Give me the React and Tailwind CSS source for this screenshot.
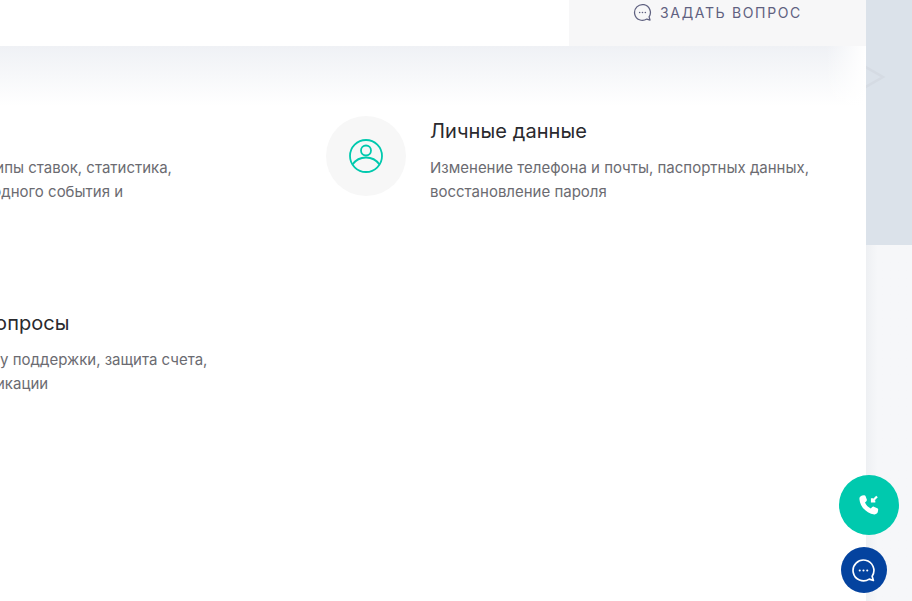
import React from 'react';

const cards = [
  {
    title: 'Правила игры',
    lines: ['Правила сервиса, типы ставок, статистика,', 'результаты ставок одного события и'],
  },
  {
    title: 'Личные данные',
    lines: ['Изменение телефона и почты, паспортных данных,', 'восстановление пароля'],
    icon: true,
  },
  {
    title: 'Технические вопросы',
    lines: ['Обращение в службу поддержки, защита счета,', 'и варианты коммуникации'],
  },
];

function ChatIcon({ className }) {
  return (
    <svg viewBox="0 0 24 24" fill="none" stroke="currentColor" className={className}>
      <path d="M21.5 21.5 L20.3 17.5 A10 10 0 1 0 17.5 20.3 Z" strokeWidth="1.6" strokeLinejoin="round" />
      <circle cx="8.4" cy="12" r="1" fill="currentColor" stroke="none" />
      <circle cx="12" cy="12" r="1" fill="currentColor" stroke="none" />
      <circle cx="15.6" cy="12" r="1" fill="currentColor" stroke="none" />
    </svg>
  );
}

function PersonIcon() {
  return (
    <svg viewBox="0 0 34 34" fill="none" stroke="currentColor" strokeWidth="1.8" className="h-[34px] w-[34px] text-[#00c9ae]">
      <circle cx="17" cy="17" r="16" />
      <circle cx="17" cy="11.5" r="5" />
      <path d="M3.5 25.5 C7 20.5 12 18.5 17 18.5 C22 18.5 27 20.5 30.5 25.5" />
    </svg>
  );
}

function PhoneIcon() {
  return (
    <svg viewBox="0 0 24 24" className="h-[24px] w-[24px] text-white">
      <path
        fill="currentColor"
        d="M5.2 2.6 L7 2.2 C7.7 2.1 8.3 2.5 8.5 3.1 L9.8 6.6 C10 7.2 9.8 7.8 9.4 8.2 L8 9.6 C9 12 11 14.2 13.8 15.6 L15.2 14.1 C15.6 13.7 16.2 13.5 16.8 13.7 L20.3 15.2 C20.9 15.4 21.3 16 21.2 16.6 L20.9 18.6 C20.6 20.4 19.1 21.6 17.3 21.4 C9.4 20.5 2.9 13.6 2.4 6 C2.3 4.4 3.5 3 5.2 2.6 Z"
      />
      <path d="M20 3.5 L15.5 8 M15 5.2 V8.5 H18.3" fill="none" stroke="currentColor" strokeWidth="2.2" />
    </svg>
  );
}

export default function App() {
  return (
    <div className="relative flex h-[601px] w-[912px] overflow-hidden bg-white font-['Inter','Liberation_Sans',sans-serif]">
      <main className="w-[866px] shrink-0 overflow-hidden bg-white">
        <header className="flex h-[46px] justify-end">
          <div className="flex h-full w-[297px] items-start justify-center bg-[#f7f7f8] pt-[3px]">
            <button className="flex h-[18px] items-center gap-[8px] text-[14px] uppercase tracking-[1.65px] text-[#5f6180]">
              <ChatIcon className="h-[19px] w-[19px]" />
              Задать вопрос
            </button>
          </div>
        </header>

        <div className="relative h-[60px] bg-gradient-to-b from-[#eff1f5] to-white">
          <div className="absolute inset-y-0 right-0 w-[40px] bg-gradient-to-r from-transparent to-white" />
        </div>

        <div className="mt-[10px] ml-[-253px] grid w-[1158px] grid-cols-2 gap-y-[112px]">
          {cards.map((c) => (
            <div key={c.title} className="flex h-[80px] gap-[24px]">
              <div className="flex h-[80px] w-[80px] shrink-0 items-center justify-center rounded-full bg-[#f7f7f7]">
                {c.icon && <PersonIcon />}
              </div>
              <div className="w-[400px]">
                <h3 className="text-[20px] leading-[30px] tracking-[0.08px] text-[#2a2a2e]">{c.title}</h3>
                <p className="mt-[10px] whitespace-nowrap text-[15px] leading-[24px] text-[#6b6b71]">
                  {c.lines[0]}
                  <br />
                  {c.lines[1]}
                </p>
              </div>
            </div>
          ))}
        </div>
      </main>

      <aside className="relative flex w-[46px] flex-col">
        <div className="h-[245px] bg-[#dbe2ea]">
          <svg viewBox="0 0 20 28" className="mt-[63px] h-[28px] w-[20px] text-[#d5dbe3]" fill="none" stroke="currentColor" strokeWidth="2.5">
            <path d="M-4 2 L17 14 L-4 26" />
          </svg>
        </div>
        <div className="flex-1 bg-gradient-to-r from-[#eef0f3] to-[#f6f7f9] to-[25%]" />
      </aside>

      <button className="absolute top-[475px] left-[839px] flex h-[60px] w-[60px] items-center justify-center rounded-full bg-[#00c9ae]">
        <PhoneIcon />
      </button>
      <button className="absolute top-[547px] left-[841px] flex h-[46px] w-[46px] items-center justify-center rounded-full bg-[#04439f] text-white">
        <ChatIcon className="mr-[2px] h-[25px] w-[25px]" />
      </button>
    </div>
  );
}
